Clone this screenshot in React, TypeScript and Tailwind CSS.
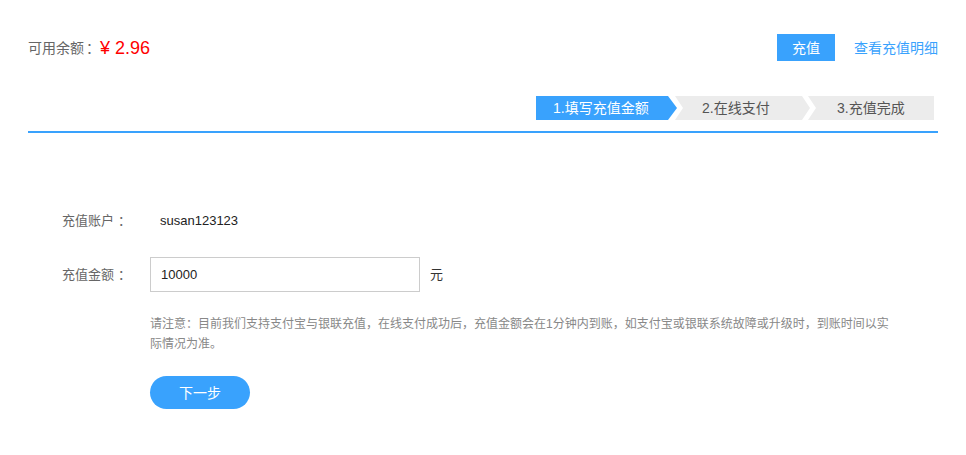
import React from "react";

// 充值页：余额 + 步骤条 + 充值表单

const FONT = { fontFamily: '"Liberation Sans", "Noto Sans CJK SC", Arial, sans-serif' };

const STEPS = [
  { label: "1.填写充值金额", active: true },
  { label: "2.在线支付", active: false },
  { label: "3.充值完成", active: false },
];

function Steps() {
  return (
    <div className="flex h-6 justify-end pr-1">
      <div
        className="flex h-6 w-[141px] items-center bg-[#39a2fd] pl-[17px] text-sm text-white [clip-path:polygon(0_0,calc(100%-9px)_0,100%_50%,calc(100%-9px)_100%,0_100%)]"
      >
        {STEPS[0].label}
      </div>
      <div
        className="-ml-[2px] flex h-6 w-[135px] items-center bg-[#ececec] pl-[27px] text-sm text-[#555] [clip-path:polygon(0_0,calc(100%-8px)_0,100%_50%,calc(100%-8px)_100%,0_100%,8px_50%)]"
      >
        {STEPS[1].label}
      </div>
      <div
        className="-ml-[2px] flex h-6 w-[126px] items-center bg-[#ececec] pl-[29px] text-sm text-[#555] [clip-path:polygon(0_0,100%_0,100%_100%,0_100%,8px_50%)]"
      >
        {STEPS[2].label}
      </div>
    </div>
  );
}

function Label({ text }: { text: string }) {
  return (
    <span className="w-[88px] text-[#666]">
      {text}
      <span className="ml-[4px]">：</span>
    </span>
  );
}

export default function App() {
  return (
    <div className="h-[455px] w-[966px] overflow-hidden bg-white px-[28px] pt-[34px]" style={FONT}>
      <div className="flex h-[27px] items-center justify-between">
        <div className="flex items-center">
          <span className="text-sm text-[#666]">
            可用余额<span className="ml-[2px]">：</span>
          </span>
          <span className="text-lg text-[#ff0000]">¥ 2.96</span>
        </div>
        <div className="flex items-center">
          <button className="ml-[1px] h-[27px] w-[58px] bg-[#39a2fd] text-sm text-white">充值</button>
          <a className="ml-[19px] text-sm text-[#39a2fd]">查看充值明细</a>
        </div>
      </div>

      <div className="mt-[35px]">
        <Steps />
      </div>
      <div className="mt-[11px] h-[2px] bg-[#39a2fd]" />

      <div className="mt-[76px] pl-[34px]">
        <div className="flex h-6 items-center text-[13px]">
          <Label text="充值账户" />
          <span className="pl-[10px] text-[#222]">susan123123</span>
        </div>
        <div className="mt-[24px] flex items-center text-[13px]">
          <Label text="充值金额" />
          <input
            defaultValue="10000"
            className="h-[35px] w-[270px] border border-[#ccc] px-[10px] text-[13px] text-[#222] outline-none"
          />
          <span className="ml-[10px] text-[#333]">元</span>
        </div>
        <div className="ml-[88px] mt-[22px] w-[745px] text-xs leading-5 text-[#888]">
          请注意：目前我们支持支付宝与银联充值，在线支付成功后，充值金额会在1分钟内到账，如支付宝或银联系统故障或升级时，到账时间以实际情况为准。
        </div>
        <button className="ml-[88px] mt-[22px] h-[33px] w-[100px] rounded-full bg-[#39a2fd] text-sm text-white">
          下一步
        </button>
      </div>
    </div>
  );
}
